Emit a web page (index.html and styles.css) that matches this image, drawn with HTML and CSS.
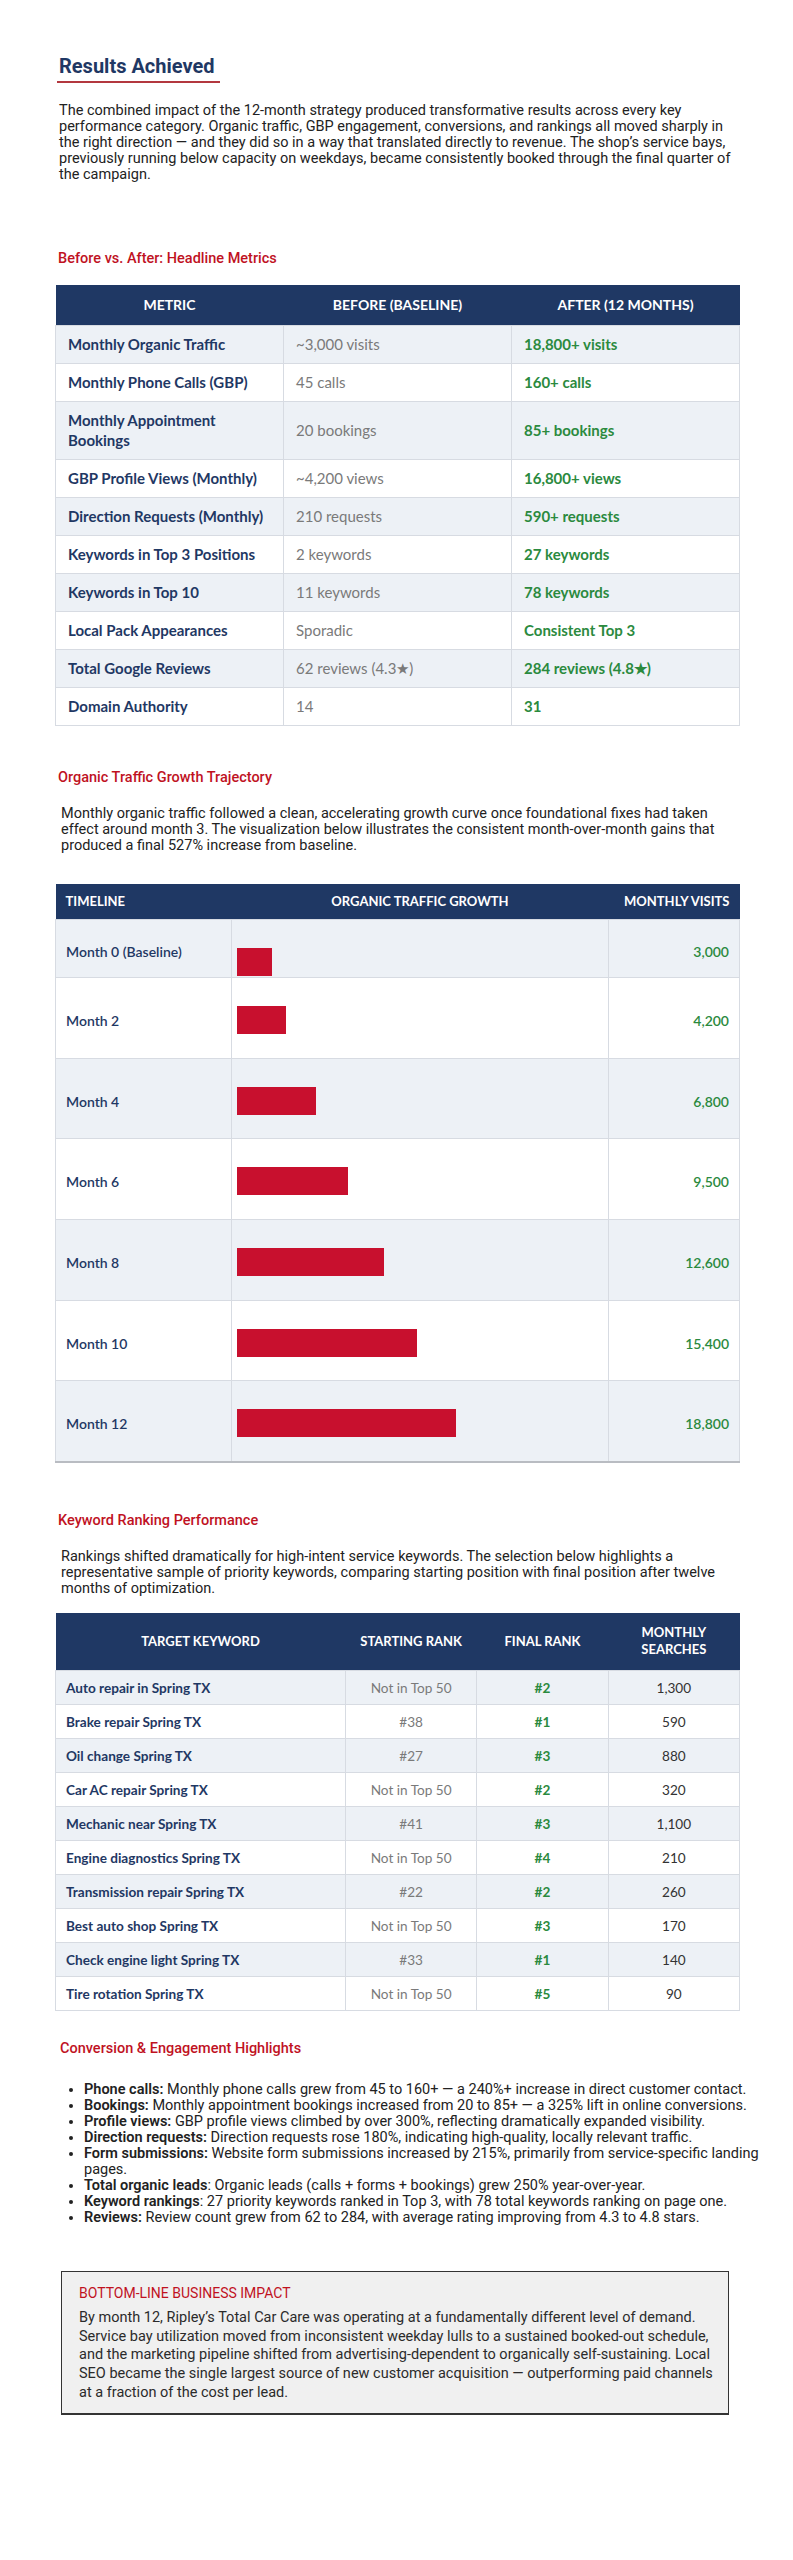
FILE: index.html
```html
<!DOCTYPE html>
<html lang="en">
<head>
<meta charset="utf-8">
<title>Results Achieved</title>
<link rel="stylesheet" href="styles.css">
</head>
<body>
<main class="page">
  <h1 class="title">Results Achieved</h1>
  <p class="lead">The combined impact of the 12-month strategy produced transformative results across every key performance category. Organic traffic, GBP engagement, conversions, and rankings all moved sharply in the right direction — and they did so in a way that translated directly to revenue. The shop’s service bays, previously running below capacity on weekdays, became consistently booked through the final quarter of the campaign.</p>

  <h2 class="sub sub-metrics">Before vs. After: Headline Metrics</h2>
  <table class="tbl metrics">
    <thead>
      <tr><th>METRIC</th><th>BEFORE (BASELINE)</th><th>AFTER (12 MONTHS)</th></tr>
    </thead>
    <tbody>
      <tr><td class="name">Monthly Organic Traffic</td><td class="before">~3,000 visits</td><td class="after">18,800+ visits</td></tr>
      <tr><td class="name">Monthly Phone Calls (GBP)</td><td class="before">45 calls</td><td class="after">160+ calls</td></tr>
      <tr><td class="name">Monthly Appointment<br>Bookings</td><td class="before">20 bookings</td><td class="after">85+ bookings</td></tr>
      <tr><td class="name">GBP Profile Views (Monthly)</td><td class="before">~4,200 views</td><td class="after">16,800+ views</td></tr>
      <tr><td class="name">Direction Requests (Monthly)</td><td class="before">210 requests</td><td class="after">590+ requests</td></tr>
      <tr><td class="name">Keywords in Top 3 Positions</td><td class="before">2 keywords</td><td class="after">27 keywords</td></tr>
      <tr><td class="name">Keywords in Top 10</td><td class="before">11 keywords</td><td class="after">78 keywords</td></tr>
      <tr><td class="name">Local Pack Appearances</td><td class="before">Sporadic</td><td class="after">Consistent Top 3</td></tr>
      <tr><td class="name">Total Google Reviews</td><td class="before">62 reviews (4.3★)</td><td class="after">284 reviews (4.8★)</td></tr>
      <tr><td class="name">Domain Authority</td><td class="before">14</td><td class="after">31</td></tr>
    </tbody>
  </table>

  <h2 class="sub sub-traffic">Organic Traffic Growth Trajectory</h2>
  <p class="text text-traffic">Monthly organic traffic followed a clean, accelerating growth curve once foundational fixes had taken effect around month 3. The visualization below illustrates the consistent month-over-month gains that produced a final 527% increase from baseline.</p>
  <table class="tbl growth">
    <thead>
      <tr><th class="g-time">TIMELINE</th><th class="g-bar">ORGANIC TRAFFIC GROWTH</th><th class="g-val">MONTHLY VISITS</th></tr>
    </thead>
    <tbody>
      <tr class="first"><td class="label">Month 0 (Baseline)</td><td class="barcell"><div class="bar" style="width:35px"></div></td><td class="val">3,000</td></tr>
      <tr><td class="label">Month 2</td><td class="barcell"><div class="bar" style="width:49px"></div></td><td class="val">4,200</td></tr>
      <tr><td class="label">Month 4</td><td class="barcell"><div class="bar" style="width:79px"></div></td><td class="val">6,800</td></tr>
      <tr><td class="label">Month 6</td><td class="barcell"><div class="bar" style="width:111px"></div></td><td class="val">9,500</td></tr>
      <tr><td class="label">Month 8</td><td class="barcell"><div class="bar" style="width:147px"></div></td><td class="val">12,600</td></tr>
      <tr><td class="label">Month 10</td><td class="barcell"><div class="bar" style="width:180px"></div></td><td class="val">15,400</td></tr>
      <tr><td class="label">Month 12</td><td class="barcell"><div class="bar" style="width:219px"></div></td><td class="val">18,800</td></tr>
    </tbody>
  </table>

  <h2 class="sub sub-keywords">Keyword Ranking Performance</h2>
  <p class="text text-keywords">Rankings shifted dramatically for high-intent service keywords. The selection below highlights a representative sample of priority keywords, comparing starting position with final position after twelve months of optimization.</p>
  <table class="tbl ranks">
    <thead>
      <tr><th class="k-kw">TARGET KEYWORD</th><th class="k-col">STARTING RANK</th><th class="k-col">FINAL RANK</th><th class="k-col">MONTHLY<br>SEARCHES</th></tr>
    </thead>
    <tbody>
      <tr><td class="kw">Auto repair in Spring TX</td><td class="start">Not in Top 50</td><td class="final">#2</td><td class="vol">1,300</td></tr>
      <tr><td class="kw">Brake repair Spring TX</td><td class="start">#38</td><td class="final">#1</td><td class="vol">590</td></tr>
      <tr><td class="kw">Oil change Spring TX</td><td class="start">#27</td><td class="final">#3</td><td class="vol">880</td></tr>
      <tr><td class="kw">Car AC repair Spring TX</td><td class="start">Not in Top 50</td><td class="final">#2</td><td class="vol">320</td></tr>
      <tr><td class="kw">Mechanic near Spring TX</td><td class="start">#41</td><td class="final">#3</td><td class="vol">1,100</td></tr>
      <tr><td class="kw">Engine diagnostics Spring TX</td><td class="start">Not in Top 50</td><td class="final">#4</td><td class="vol">210</td></tr>
      <tr><td class="kw">Transmission repair Spring TX</td><td class="start">#22</td><td class="final">#2</td><td class="vol">260</td></tr>
      <tr><td class="kw">Best auto shop Spring TX</td><td class="start">Not in Top 50</td><td class="final">#3</td><td class="vol">170</td></tr>
      <tr><td class="kw">Check engine light Spring TX</td><td class="start">#33</td><td class="final">#1</td><td class="vol">140</td></tr>
      <tr><td class="kw">Tire rotation Spring TX</td><td class="start">Not in Top 50</td><td class="final">#5</td><td class="vol">90</td></tr>
    </tbody>
  </table>

  <h2 class="sub sub-conv">Conversion &amp; Engagement Highlights</h2>
  <ul class="highlights">
    <li><b>Phone calls:</b> Monthly phone calls grew from 45 to 160+ — a 240%+ increase in direct customer contact.</li>
    <li><b>Bookings:</b> Monthly appointment bookings increased from 20 to 85+ — a 325% lift in online conversions.</li>
    <li><b>Profile views:</b> GBP profile views climbed by over 300%, reflecting dramatically expanded visibility.</li>
    <li><b>Direction requests:</b> Direction requests rose 180%, indicating high-quality, locally relevant traffic.</li>
    <li><b>Form submissions:</b> Website form submissions increased by 215%, primarily from service-specific landing pages.</li>
    <li><b>Total organic leads</b>: Organic leads (calls + forms + bookings) grew 250% year-over-year.</li>
    <li><b>Keyword rankings</b>: 27 priority keywords ranked in Top 3, with 78 total keywords ranking on page one.</li>
    <li><b>Reviews:</b> Review count grew from 62 to 284, with average rating improving from 4.3 to 4.8 stars.</li>
  </ul>

  <section class="impact">
    <h3 class="impact-label">BOTTOM-LINE BUSINESS IMPACT</h3>
    <p class="impact-text">By month 12, Ripley’s Total Car Care was operating at a fundamentally different level of demand. Service bay utilization moved from inconsistent weekday lulls to a sustained booked-out schedule, and the marketing pipeline shifted from advertising-dependent to organically self-sustaining. Local SEO became the single largest source of new customer acquisition — outperforming paid channels at a fraction of the cost per lead.</p>
  </section>
</main>
</body>
</html>
```

FILE: styles.css
```css
* { box-sizing: border-box; }
html, body { margin: 0; padding: 0; background: #fff; }
body {
  font-family: "Roboto", "Liberation Sans", sans-serif;
  color: #222;
  font-size: 14.5px;
  line-height: 16px;
}
.page {
  width: 793px;
  padding: 54px 53px 120px 55px;
}
.title {
  display: block;
  width: fit-content;
  margin: 0 0 0 2px;
  padding: 0 6px 3px 2px;
  font-size: 20px;
  line-height: 24px;
  font-weight: 700;
  color: #1f3864;
  border-bottom: 2px solid #b3383f;
}
.lead {
  margin: 20px 0 0 4px;
  width: 676px;
}
.sub {
  margin: 0 0 0 3px;
  font-size: 14.5px;
  line-height: 16px;
  font-weight: 500;
  color: #c0121f;
}
.sub-metrics { margin-top: 68px; }
.sub-traffic { margin-top: 44px; }
.sub-keywords { margin-top: 50px; }
.sub-conv { margin-top: 30px; margin-left: 5px; }

.text { margin: 20px 0 0 6px; width: 662px; }

.tbl {
  width: 100%;
  border-collapse: collapse;
  table-layout: fixed;
  font-family: "Lato", "Liberation Sans", sans-serif;
}
.tbl th {
  background: #1f3864;
  color: #fff;
  font-weight: 700;
}
.tbl td { border: 1px solid #d7dbe2; }
.tbl tbody tr:nth-child(odd) td { background: #edf1f6; }
.tbl tbody tr:nth-child(even) td { background: #fff; }

/* metrics */
.metrics { margin-top: 18px; font-size: 15px; }
.metrics th { height: 40px; padding: 0 12px; text-align: center; width: 33.33%; font-size: 14px; }
.metrics td { padding: 8px 12px 9px; line-height: 20px; }
.metrics .name { color: #1f3864; font-weight: 700; }
.metrics .before { color: #7a7a7a; }
.metrics .after { color: #2b8a3e; font-weight: 700; }

/* growth */
.growth { margin-top: 30px; font-size: 14px; }
.growth th { height: 36px; padding: 0 10px; font-size: 13px; }
.growth .g-time { width: 176px; text-align: left; }
.growth .g-bar { width: 377px; text-align: center; }
.growth .g-val { text-align: right; }
.growth td { height: 80.7px; padding: 0 10px; }
.growth tr.first td { height: 58px; }
.growth .label { color: #1f3864; font-weight: 600; padding-top: 6px; }
.growth .barcell { vertical-align: top; padding: 28px 5px 0; }
.growth .bar { height: 28px; background: #c8102e; }
.growth .val { text-align: right; color: #2b8a3e; font-weight: 600; padding-top: 6px; }
.growth tbody tr:last-child td { border-bottom: 2px solid #b9bcc2; }

/* ranks */
.ranks { margin-top: 16px; font-size: 13.6px; }
.ranks th { height: 58px; padding: 0 8px; line-height: 17.7px; text-align: center; font-size: 13px; }
.ranks .k-kw { width: 290px; }
.ranks td { height: 34px; padding: 0 10px; line-height: 18px; }
.ranks .kw { color: #1f3864; font-weight: 700; }
.ranks .start { text-align: center; color: #7a7a7a; }
.ranks .final { text-align: center; color: #2b8a3e; font-weight: 700; }
.ranks .vol { text-align: center; color: #333; }

/* highlights */
.highlights {
  margin: 25px 0 0 5px;
  padding: 0 0 0 24px;
  width: 712px;
  color: #222;
}
.highlights b { font-weight: 600; }

/* impact */
.impact {
  margin: 45px 0 0 6px;
  width: 668px;
  background: #f0f0f0;
  border: 1.5px solid #333;
  border-bottom-width: 2px;
  padding: 12px 8px 11px 17px;
}
.impact-label {
  margin: 0;
  font-size: 14px;
  line-height: 18.7px;
  font-weight: 400;
  color: #c0121f;
}
.impact-text {
  margin: 6px 0 0;
  font-size: 14.5px;
  line-height: 18.7px;
  color: #2b2b2b;
}
```
